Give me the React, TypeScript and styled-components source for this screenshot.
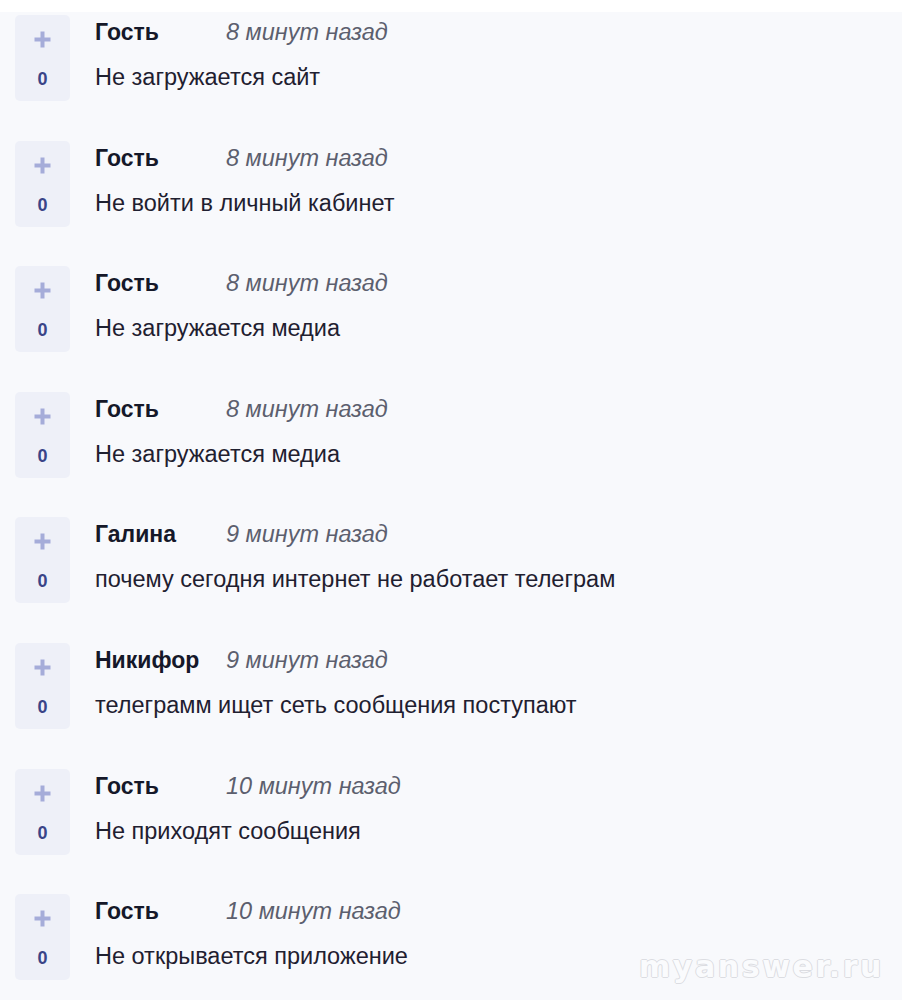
import styled, { createGlobalStyle } from "styled-components";

const GlobalStyle = createGlobalStyle`
    html, body {
        margin: 0;
        padding: 0;
        background: #ffffff;
    }

    body {
        font-family: "Liberation Sans", Arial, sans-serif;
    }
`;

interface Answer {
    author: string;
    time: string;
    text: string;
    votes: number;
}

const answers: Answer[] = [
    { author: "Гость", time: "8 минут назад", text: "Не загружается сайт", votes: 0 },
    { author: "Гость", time: "8 минут назад", text: "Не войти в личный кабинет", votes: 0 },
    { author: "Гость", time: "8 минут назад", text: "Не загружается медиа", votes: 0 },
    { author: "Гость", time: "8 минут назад", text: "Не загружается медиа", votes: 0 },
    { author: "Галина", time: "9 минут назад", text: "почему сегодня интернет не работает телеграм", votes: 0 },
    { author: "Никифор", time: "9 минут назад", text: "телеграмм ищет сеть сообщения поступают", votes: 0 },
    { author: "Гость", time: "10 минут назад", text: "Не приходят сообщения", votes: 0 },
    { author: "Гость", time: "10 минут назад", text: "Не открывается приложение", votes: 0 },
];

const Page = styled.div`
    position: relative;
    height: 1000px;
    overflow: hidden;
    padding-top: 12px;
    box-sizing: border-box;
`;

const Panel = styled.section`
    width: 902px;
    height: 988px;
    background: #f8f9fc;
    padding: 3px 0 0 15px;
    box-sizing: border-box;
    display: flex;
    flex-direction: column;
    gap: 39.6px;
`;

const Row = styled.article`
    display: flex;
    align-items: flex-start;
    gap: 25px;
`;

const VoteBox = styled.div`
    width: 55px;
    height: 86px;
    flex-shrink: 0;
    border-radius: 5px;
    background: #eef0f8;
    display: flex;
    flex-direction: column;
    align-items: center;
`;

const PlusButton = styled.button`
    margin-top: 16px;
    width: 17px;
    height: 17px;
    padding: 0;
    border: 0;
    background: none;
    display: flex;
    align-items: center;
    justify-content: center;
    cursor: pointer;
`;

const VoteCount = styled.span`
    margin-top: 20px;
    font-size: 18px;
    font-weight: 700;
    line-height: 22px;
    color: #3a4488;
`;

const Body = styled.div`
    display: flex;
    flex-direction: column;
    padding-top: 4px;
`;

const Meta = styled.div`
    display: flex;
    align-items: baseline;
    line-height: 26px;
`;

const Author = styled.span`
    width: 131px;
    flex-shrink: 0;
    font-size: 23px;
    font-weight: 700;
    color: #151829;
`;

const Time = styled.span`
    font-size: 23.5px;
    font-style: italic;
    color: #5c5f6e;
`;

const Text = styled.p`
    margin: 19px 0 0;
    font-size: 23.5px;
    line-height: 26px;
    color: #1f2030;
`;

const Watermark = styled.div`
    position: absolute;
    right: 19px;
    bottom: 16px;
    font-family: "DejaVu Sans", sans-serif;
    font-weight: 700;
    font-size: 30px;
    letter-spacing: 2.6px;
    color: #fafbfd;
    text-shadow:
        1px 0 0 #dcdde2,
        -1px 0 0 #dcdde2,
        0 1px 0 #dcdde2,
        0 -1px 0 #dcdde2;
`;

const PlusIcon = () => (
    <svg width="17" height="17" viewBox="0 0 17 17">
        <path d="M8.5 0.5v16M0.5 8.5h16" stroke="#a5acd9" strokeWidth="4" />
    </svg>
);

export default function App() {
    return (
        <>
            <GlobalStyle />
            <Page>
                <Panel>
                    {answers.map((a, i) => (
                        <Row key={i}>
                            <VoteBox>
                                <PlusButton aria-label="Плюс">
                                    <PlusIcon />
                                </PlusButton>
                                <VoteCount>{a.votes}</VoteCount>
                            </VoteBox>
                            <Body>
                                <Meta>
                                    <Author>{a.author}</Author>
                                    <Time>{a.time}</Time>
                                </Meta>
                                <Text>{a.text}</Text>
                            </Body>
                        </Row>
                    ))}
                </Panel>
                <Watermark>myanswer.ru</Watermark>
            </Page>
        </>
    );
}
